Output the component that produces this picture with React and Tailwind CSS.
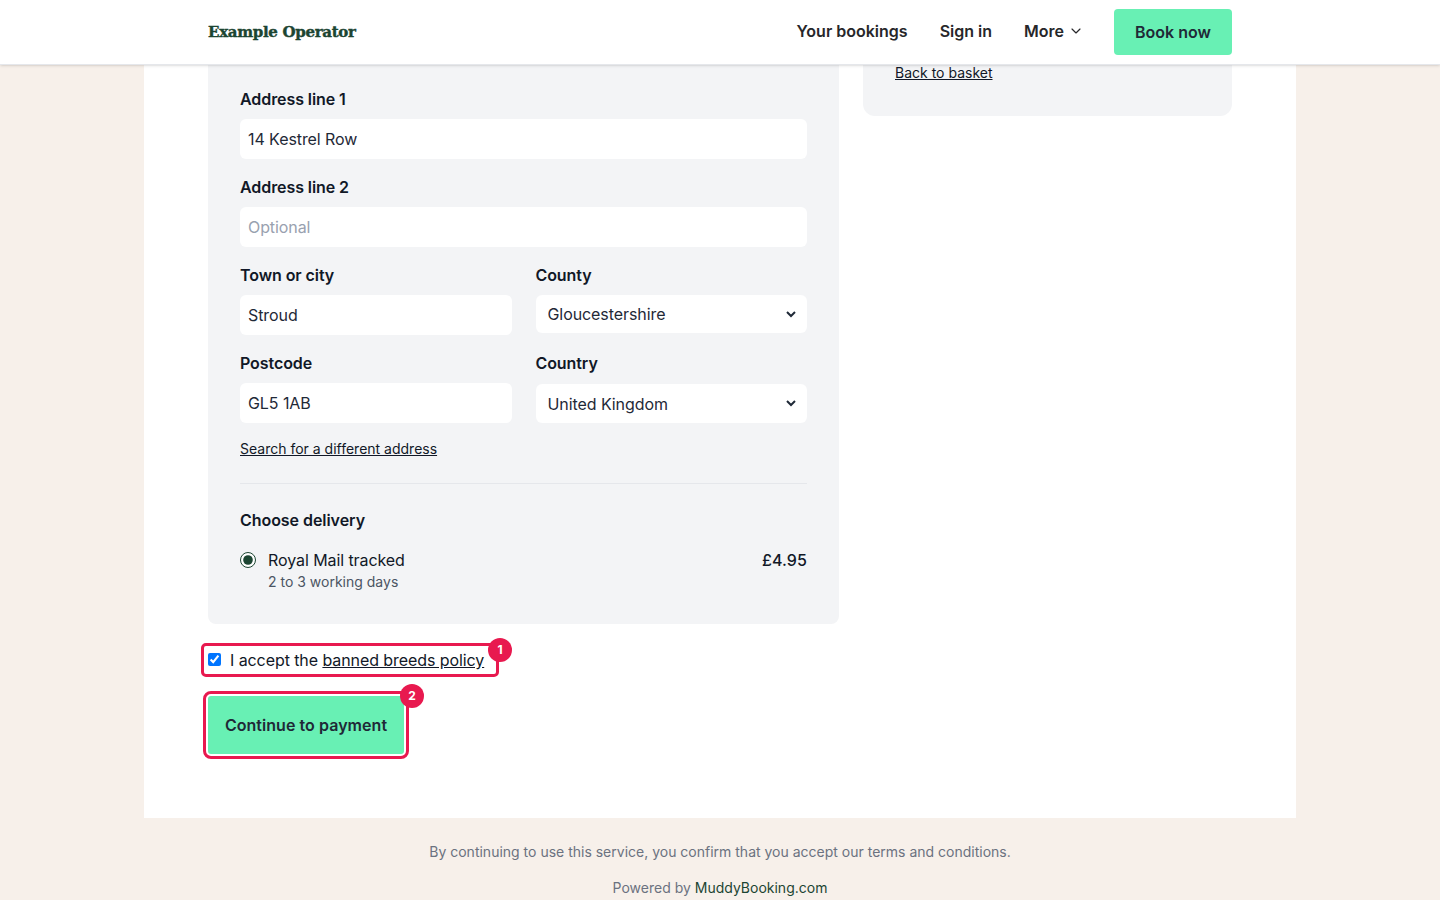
import React from 'react';
import { ChevronDown } from 'lucide-react';

const inputClass =
  'w-full h-10 px-2 rounded-md bg-white text-base tracking-[-0.08px] text-[#1f2937] placeholder:text-gray-400 focus:outline-none';
const selectClass =
  'w-full h-[38px] pl-2 rounded-md bg-white border-r-8 border-transparent text-base tracking-[-0.08px] text-[#1f2937] focus:outline-none';

const Field = ({ label, children }) => (
  <div>
    <label className="block mb-2 text-base leading-6 font-semibold tracking-[-0.08px] text-[#111827]">{label}</label>
    {children}
  </div>
);

const Badge = ({ n, className }) => (
  <span
    className={`absolute flex items-center justify-center w-6 h-6 rounded-full bg-[#e8194f] text-white text-xs font-bold ${className}`}
  >
    {n}
  </span>
);

const Header = () => (
  <header className="h-[65px] shrink-0 bg-white border-b border-gray-200 shadow-sm relative z-10">
    <div className="w-[1024px] h-16 mx-auto flex items-center justify-between">
      <span className="font-['DejaVu_Serif',serif] font-bold text-[15px] tracking-[-0.3px] text-[#1c4532] [-webkit-text-stroke:0.4px_#1c4532]">
        Example Operator
      </span>
      <nav className="flex items-center text-base font-semibold text-[#27272a]">
        <a className="mr-8 -mt-0.5">Your bookings</a>
        <a className="mr-8 -mt-0.5">Sign in</a>
        <a className="flex items-center gap-1 mr-[30px] -mt-0.5">
          More <ChevronDown size={16} strokeWidth={1.75} />
        </a>
        <a className="flex items-center justify-center w-[118px] h-[46px] rounded bg-[#68f0b4] font-semibold text-[#1f2937]">
          Book now
        </a>
      </nav>
    </div>
  </header>
);

const AddressForm = () => (
  <div className="bg-[#f3f4f6] rounded-b-lg px-8 pt-[22px] pb-8">
    <div className="flex flex-col gap-4">
      <Field label="Address line 1">
        <input className={inputClass} defaultValue="14 Kestrel Row" />
      </Field>
      <Field label="Address line 2">
        <input className={inputClass} placeholder="Optional" />
      </Field>
      <div className="grid grid-cols-2 gap-x-6 gap-y-4">
        <Field label="Town or city">
          <input className={inputClass} defaultValue="Stroud" />
        </Field>
        <Field label="County">
          <select className={selectClass} defaultValue="Gloucestershire">
            <option>Gloucestershire</option>
          </select>
        </Field>
        <Field label="Postcode">
          <input className={inputClass} defaultValue="GL5 1AB" />
        </Field>
        <Field label="Country">
          <select className={`${selectClass} mt-px h-[39px]`} defaultValue="United Kingdom">
            <option>United Kingdom</option>
          </select>
        </Field>
      </div>
    </div>
    <a className="block mt-4 text-sm leading-5 underline text-[#111827]">Search for a different address</a>
    <hr className="mt-[24px] border-gray-200" />
    <h3 className="mt-6 text-base leading-6 font-semibold tracking-[-0.05px] text-[#111827]">Choose delivery</h3>
    <div className="mt-4 flex items-start justify-between">
      <div className="flex items-start">
        <input type="radio" defaultChecked className="w-4 h-4 mt-1 mr-3 accent-[#1c4532]" />
        <div>
          <div className="text-base leading-6 tracking-[-0.08px] text-[#111827]">Royal Mail tracked</div>
          <div className="text-sm leading-5 text-[#4b5563]">2 to 3 working days</div>
        </div>
      </div>
      <span className="text-base leading-6 font-medium tracking-[0.1px] text-[#111827]">£4.95</span>
    </div>
  </div>
);

const App = () => {
  return (
    <div className="h-screen overflow-hidden flex flex-col bg-[#f7f0ea] font-['Inter',sans-serif]">
      <Header />
      <main className="w-[1152px] mx-auto shrink-0 bg-white px-16 pb-16">
        <div className="grid grid-cols-[631px_369px] gap-6 items-start">
          <div>
            <AddressForm />
            <div className="relative w-[298px] mt-[19px] -ml-[7px] flex items-center h-[34px] pl-1 border-[3px] border-[#e8194f] rounded-[5px]">
              <input type="checkbox" defaultChecked className="w-[13px] h-[13px] mr-[9px] -mt-0.5" />
              <span className="text-base tracking-[-0.08px] text-[#111827] whitespace-nowrap">
                I accept the <a className="underline">banned breeds policy</a>
              </span>
              <Badge n="1" className="-top-[8px] -right-[16px]" />
            </div>
            <div className="relative w-fit mt-[19px]">
              <button className="flex items-center justify-center w-[196px] h-[58px] rounded-[3px] bg-[#68f0b4] text-base font-semibold tracking-[0.05px] text-[#1f2937] outline-[3px] outline-offset-2 outline-[#e8194f]">
                Continue to payment
              </button>
              <Badge n="2" className="-top-[12px] -right-[20px]" />
            </div>
          </div>
          <div className="bg-[#f3f4f6] rounded-b-xl px-8 pb-[35px]">
            <a className="block text-sm leading-4 underline text-[#111827]">Back to basket</a>
          </div>
        </div>
      </main>
      <footer className="text-center text-sm leading-5 text-[#6b7280]">
        <p className="mt-6">By continuing to use this service, you confirm that you accept our terms and conditions.</p>
        <p className="mt-4">
          Powered by <a className="text-[#1c4532]">MuddyBooking.com</a>
        </p>
      </footer>
    </div>
  );
};

export default App;
